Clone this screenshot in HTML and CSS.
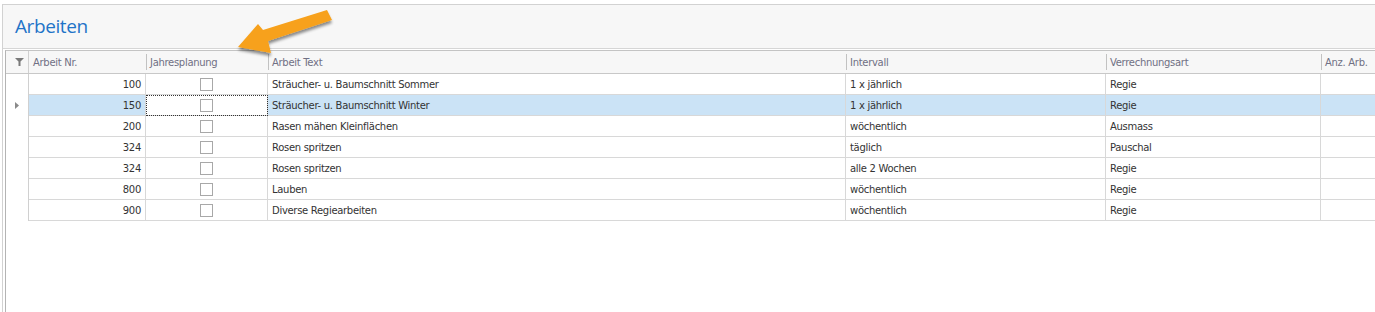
FILE: index.html
```html
<!DOCTYPE html>
<html lang="de">
<head>
<meta charset="utf-8">
<title>Arbeiten</title>
<link rel="stylesheet" href="styles.css">
</head>
<body>
<div class="panel">
  <div class="panel-head"><h1 class="title">Arbeiten</h1></div>
  <div class="grid">
    <div class="row head">
      <div class="c ind"><svg class="filter" width="9" height="8" viewBox="0 0 9 8"><path d="M0 0H9L5.5 3.5V8H3.5V3.5Z" fill="#7a7a7a"/></svg></div>
      <div class="c nr"><span class="sep"></span>Arbeit Nr.</div>
      <div class="c jp"><span class="sep"></span>Jahresplanung</div>
      <div class="c tx"><span class="sep"></span>Arbeit Text</div>
      <div class="c iv"><span class="sep"></span>Intervall</div>
      <div class="c va"><span class="sep"></span>Verrechnungsart</div>
      <div class="c an"><span class="sep"></span>Anz. Arb.</div>
    </div>
    <div class="row">
      <div class="c ind"></div><div class="c nr">100</div><div class="c jp"><span class="cb"></span></div><div class="c tx">Sträucher- u. Baumschnitt Sommer</div><div class="c iv">1 x jährlich</div><div class="c va">Regie</div><div class="c an"></div>
    </div>
    <div class="row sel">
      <div class="c ind"><svg width="4" height="7" viewBox="0 0 4 7"><path d="M0 0L4 3.5L0 7Z" fill="#8a8a8a"/></svg></div><div class="c nr">150</div><div class="c jp focus"><span class="cb"></span></div><div class="c tx">Sträucher- u. Baumschnitt Winter</div><div class="c iv">1 x jährlich</div><div class="c va">Regie</div><div class="c an"></div>
    </div>
    <div class="row">
      <div class="c ind"></div><div class="c nr">200</div><div class="c jp"><span class="cb"></span></div><div class="c tx">Rasen mähen Kleinflächen</div><div class="c iv">wöchentlich</div><div class="c va">Ausmass</div><div class="c an"></div>
    </div>
    <div class="row">
      <div class="c ind"></div><div class="c nr">324</div><div class="c jp"><span class="cb"></span></div><div class="c tx">Rosen spritzen</div><div class="c iv">täglich</div><div class="c va">Pauschal</div><div class="c an"></div>
    </div>
    <div class="row">
      <div class="c ind"></div><div class="c nr">324</div><div class="c jp"><span class="cb"></span></div><div class="c tx">Rosen spritzen</div><div class="c iv">alle 2 Wochen</div><div class="c va">Regie</div><div class="c an"></div>
    </div>
    <div class="row">
      <div class="c ind"></div><div class="c nr">800</div><div class="c jp"><span class="cb"></span></div><div class="c tx">Lauben</div><div class="c iv">wöchentlich</div><div class="c va">Regie</div><div class="c an"></div>
    </div>
    <div class="row">
      <div class="c ind"></div><div class="c nr">900</div><div class="c jp"><span class="cb"></span></div><div class="c tx">Diverse Regiearbeiten</div><div class="c iv">wöchentlich</div><div class="c va">Regie</div><div class="c an"></div>
    </div>
  </div>
</div>
<svg class="arrow" width="120" height="60" viewBox="230 4 120 60">
  <defs>
    <filter id="sh" x="-20%" y="-20%" width="140%" height="160%">
      <feGaussianBlur in="SourceAlpha" stdDeviation="1.6"/>
      <feOffset dx="0" dy="3" result="b"/>
      <feComponentTransfer><feFuncA type="linear" slope="0.45"/></feComponentTransfer>
      <feMerge><feMergeNode/><feMergeNode in="SourceGraphic"/></feMerge>
    </filter>
  </defs>
  <path d="M238 47L258 24L263 30L327 10L332 20L268 41L271 53Z" fill="#f7a11b" filter="url(#sh)"/>
</svg>
</body>
</html>
```
FILE: styles.css
```css
html, body {
  margin: 0;
  padding: 0;
  background: #ffffff;
  height: 100%;
  overflow: hidden;
}
body {
  font-family: "DejaVu Sans", "Liberation Sans", sans-serif;
  position: relative;
}
.panel {
  margin: 4px 0 0 2px;
  border-top: 1px solid #d2d2d2;
  border-left: 1px solid #d2d2d2;
  height: calc(100% - 4px);
  box-sizing: border-box;
  display: flex;
  flex-direction: column;
}
.panel-head {
  flex: none;
  height: 43px;
  background: #f7f7f7;
  border-bottom: 1px solid #d6d6d6;
  display: flex;
  align-items: center;
  padding-left: 12px;
}
.title {
  margin: 0;
  font-family: "Open Sans", "Noto Sans", sans-serif;
  font-weight: 400;
  font-size: 19px;
  color: #1f74c8;
  letter-spacing: -0.4px;
  padding-bottom: 2px;
}
.grid {
  flex: 1;
  min-height: 0;
  margin: 1px 0 0 2px;
  border-top: 1px solid #c4c4c4;
  border-left: 1px solid #b4b4b4;
  font-family: "DejaVu Sans", sans-serif;
  font-size: 10px;
  letter-spacing: -0.3px;
  color: #333;
  display: flex;
  flex-direction: column;
}
.row {
  flex: none;
  display: flex;
  height: 21px;
}
.row.head {
  height: 22px;
  background: #f7f7f7;
  border-bottom: 1px solid #c8c8c8;
  color: #707084;
}
.c {
  flex: none;
  box-sizing: border-box;
  display: flex;
  align-items: center;
  padding: 0 4px;
  white-space: nowrap;
  overflow: hidden;
  border-right: 1px solid #d8d8d8;
  border-bottom: 1px solid #d8d8d8;
  position: relative;
}
.head .c {
  border: none;
  padding-left: 4px;
}
.ind { width: 23px; justify-content: center; border-bottom: none; border-right: 1px solid #d0d0d0; padding: 0; }
.head .ind { border-right: 1px solid #d0d0d0; }
.nr { width: 117px; justify-content: flex-end; }
.jp { width: 122px; justify-content: center; }
.tx { width: 578px; }
.iv { width: 260px; }
.va { width: 215px; }
.an { flex: 1; border-right: none; }
.head .nr, .head .jp { justify-content: flex-start; }
.head .sep {
  position: absolute;
  left: 0;
  top: 3px;
  bottom: 3px;
  width: 1px;
  background: #c2c2c2;
}
.head .nr .sep { display: none; }
.sel .c:not(.ind):not(.focus) { background: #cbe3f6; }
.focus { outline: 1px dotted #333; outline-offset: -1px; }
.cb {
  width: 13px;
  height: 13px;
  box-sizing: border-box;
  border: 1px solid #a8a8a8;
  background: #fff;
}
.filter { display: block; }
.arrow {
  position: absolute;
  left: 230px;
  top: 4px;
}
```
